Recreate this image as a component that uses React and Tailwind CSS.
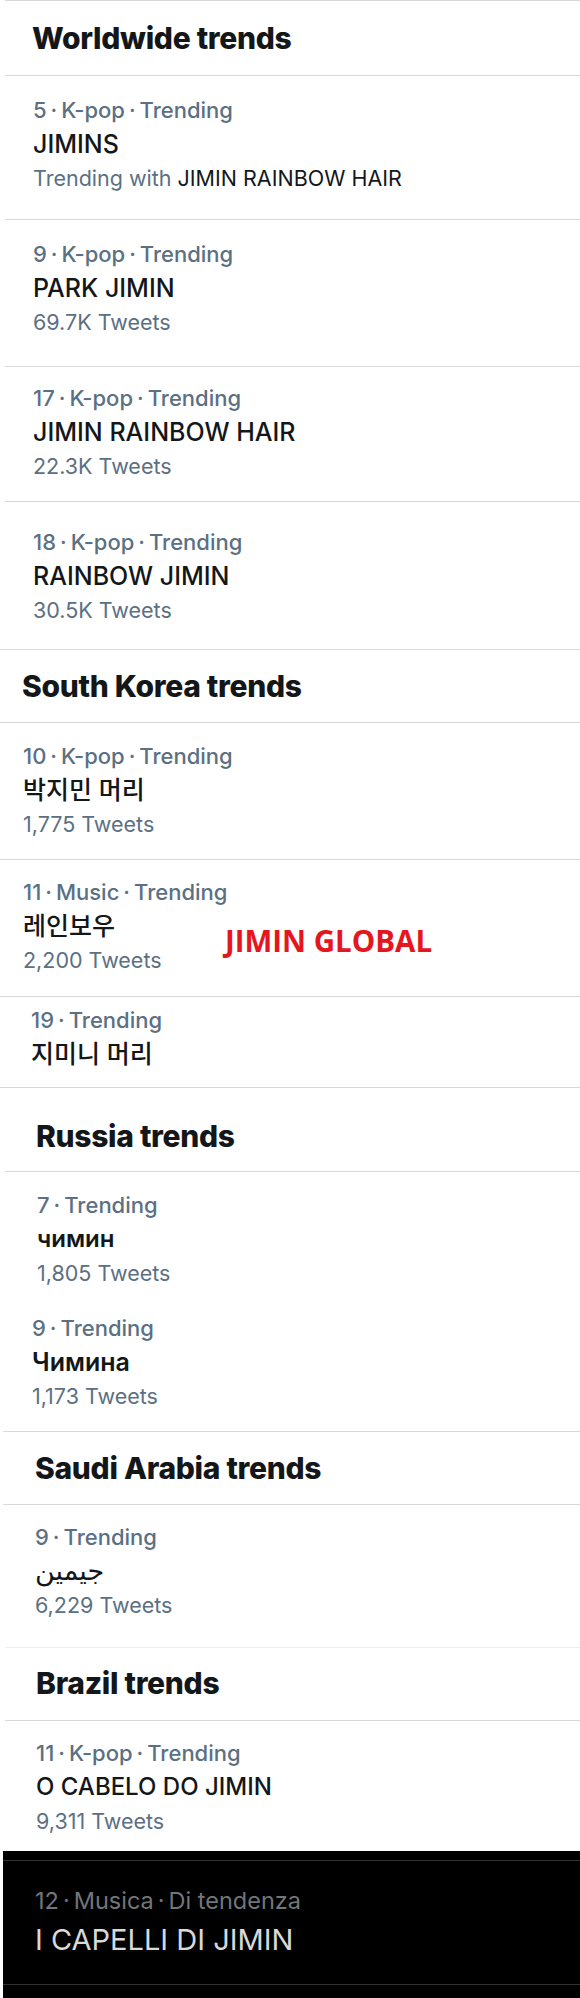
import React from 'react';

const sans = "font-['Inter','Noto_Sans_CJK_KR','DejaVu_Sans',sans-serif]";

const Divider = ({ className = '' }) => <div className={`h-px bg-[#d5d9dc] ${className}`} />;

const Heading = ({ children, className = '' }) => (
  <div className={`text-[30px] leading-[34px] font-extrabold tracking-[-0.3px] text-[#14171a] ${className}`}>
    {children}
  </div>
);

// "5 · K-pop · Trending" with the tight dot spacing of the iOS app
const Meta = ({ text, className }) => {
  const parts = text.split(' · ');
  return (
    <div className={className}>
      {parts.map((p, i) => (
        <React.Fragment key={i}>
          {i > 0 && <span className="mx-[4px]">·</span>}
          {p}
        </React.Fragment>
      ))}
    </div>
  );
};

const Trend = ({ meta, title, sub, className, titleClass = 'text-[25px] font-medium', children }) => (
  <div className={`relative ${className}`}>
    <Meta text={meta} className="text-[22px] leading-[34px] font-medium text-[#5b7083]" />
    <div className={`leading-[34px] text-[#14171a] ${titleClass}`}>{title}</div>
    {sub && <div className="text-[21.5px] leading-[34px] text-[#5b7083]">{sub}</div>}
    {children}
  </div>
);

const worldwide = [
  {
    meta: '5 · K-pop · Trending',
    title: 'JIMINS',
    sub: (
      <>
        Trending with <span className="text-[#14171a]">JIMIN RAINBOW HAIR</span>
      </>
    ),
    pad: 'pl-[33px] pt-[17px] pb-[24px]',
  },
  { meta: '9 · K-pop · Trending', title: 'PARK JIMIN', sub: '69.7K Tweets', pad: 'pl-[33px] pt-[17px] pb-[27px]' },
  { meta: '17 · K-pop · Trending', title: 'JIMIN RAINBOW HAIR', sub: '22.3K Tweets', pad: 'pl-[33px] pt-[14px] pb-[18px]' },
  { meta: '18 · K-pop · Trending', title: 'RAINBOW JIMIN', sub: '30.5K Tweets', pad: 'pl-[33px] pt-[23px] pb-[22px]' },
];

export default function App() {
  return (
    <div className={`w-[580px] min-h-[1998px] bg-white ${sans}`}>
      {/* Worldwide */}
      <Divider className="ml-[5px]" />
      <div className="h-[74px] flex items-center pl-[32px]">
        <Heading>Worldwide trends</Heading>
      </div>
      {worldwide.map((t) => (
        <React.Fragment key={t.meta}>
          <Divider className="ml-[5px]" />
          <Trend meta={t.meta} title={t.title} sub={t.sub} className={t.pad} />
        </React.Fragment>
      ))}
      <Divider />

      {/* South Korea */}
      <div className="h-[72px] flex items-center pl-[22px]">
        <Heading>South Korea trends</Heading>
      </div>
      <Divider />
      <Trend meta="10 · K-pop · Trending" title="박지민 머리" sub="1,775 Tweets" className="pl-[23px] pt-[16px] pb-[18px]" />
      <Divider />
      <Trend meta="11 · Music · Trending" title="레인보우" sub="2,200 Tweets" className="pl-[23px] pt-[15px] pb-[19px]">
        <div className="absolute left-[225px] top-[66px] font-['Open_Sans',sans-serif] font-bold text-[29.5px] leading-[29px] text-[#e5161d]">
          JIMIN GLOBAL
        </div>
      </Trend>
      <Divider />
      <Trend meta="19 · Trending" title="지미니 머리" className="pl-[31px] pt-[6px] pb-[16px]" />
      <Divider />

      {/* Russia */}
      <div className="pl-[36px] pt-[31px] pb-[18px]">
        <Heading>Russia trends</Heading>
      </div>
      <Divider className="ml-[5px]" />
      <Trend meta="7 · Trending" title="чимин" sub="1,805 Tweets" titleClass="text-[24px] font-semibold" className="pl-[37px] pt-[16px]" />
      <Trend meta="9 · Trending" title="Чимина" sub="1,173 Tweets" titleClass="text-[25px] font-semibold" className="pl-[32px] pt-[21px] pb-[18px]" />
      <Divider className="ml-[3px]" />

      {/* Saudi Arabia */}
      <div className="pl-[35px] pt-[19px] pb-[19px]">
        <Heading>Saudi Arabia trends</Heading>
      </div>
      <Divider className="ml-[3px]" />
      <Trend meta="9 · Trending" title="جيمين" sub="6,229 Tweets" titleClass="text-[27px]" className="pl-[35px] pt-[15px] pb-[25px]" />
      <Divider className="ml-[5px] bg-[#eeeff0]" />

      {/* Brazil */}
      <div className="pl-[36px] pt-[18px] pb-[20px]">
        <Heading>Brazil trends</Heading>
      </div>
      <Divider className="ml-[5px]" />
      <Trend meta="11 · K-pop · Trending" title="O CABELO DO JIMIN" sub="9,311 Tweets" titleClass="text-[24px] font-medium" className="pl-[36px] pt-[15px] pb-[13px]" />

      {/* Italy, dark mode capture */}
      <div className="ml-[3px] h-[147px] bg-black pt-[9px]">
        <div className="h-px bg-[#2f3336]" />
        <div className="pl-[32px] pt-[22px]">
          <Meta text="12 · Musica · Di tendenza" className="text-[23.5px] leading-[36px] text-[#71767b]" />
          <div className="text-[29px] leading-[42px] text-[#d9d9d9]">I CAPELLI DI JIMIN</div>
        </div>
        <div className="mt-[23px] h-px bg-[#2f3336]" />
      </div>
    </div>
  );
}
